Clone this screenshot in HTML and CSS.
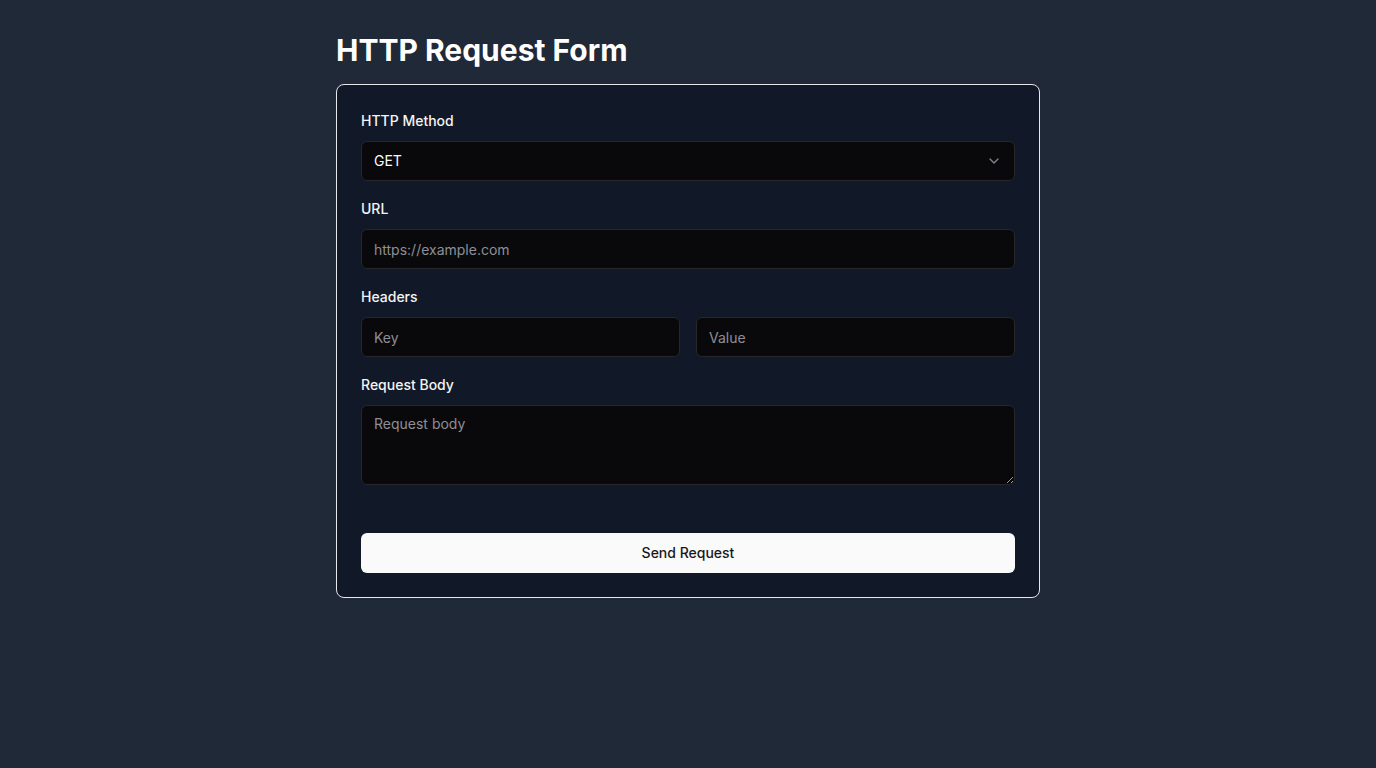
FILE: index.html
```html
<!DOCTYPE html>
<html lang="en">
<head>
<meta charset="utf-8">
<title>HTTP Request Form</title>
<link rel="stylesheet" href="styles.css">
</head>
<body>
<main class="page">
  <h1 class="title">HTTP Request Form</h1>
  <form class="card">
    <div class="field">
      <label class="label">HTTP Method</label>
      <button type="button" class="control select">
        <span>GET</span>
        <svg class="chev" width="16" height="16" viewBox="0 0 24 24" fill="none" stroke="currentColor" stroke-width="2" stroke-linecap="round" stroke-linejoin="round"><path d="m6 9 6 6 6-6"/></svg>
      </button>
    </div>
    <div class="field">
      <label class="label">URL</label>
      <input class="control" type="text" placeholder="https://example.com">
    </div>
    <div class="field">
      <label class="label">Headers</label>
      <div class="pair">
        <input class="control" type="text" placeholder="Key">
        <input class="control" type="text" placeholder="Value">
      </div>
    </div>
    <div class="field">
      <label class="label">Request Body</label>
      <textarea class="control area" placeholder="Request body"></textarea>
    </div>
    <button type="button" class="submit">Send Request</button>
  </form>
</main>
</body>
</html>
```

FILE: styles.css
```css
* { box-sizing: border-box; }
html, body { margin: 0; padding: 0; }
body {
  background: #1f2937;
  color: #f9fafb;
  font-family: Inter, "Noto Sans", sans-serif;
  min-height: 100vh;
}
.page {
  width: 704px;
  margin: 0 auto;
  padding-top: 32px;
}
.title {
  margin: 0 0 16px;
  font-size: 30px;
  line-height: 36px;
  font-weight: 700;
  color: #ffffff;
}
.card {
  background: #111827;
  border: 1px solid #e5e7eb;
  border-radius: 8px;
  padding: 24px;
  display: flex;
  flex-direction: column;
  gap: 16px;
}
.field {
  display: flex;
  flex-direction: column;
  gap: 10px;
}
.label {
  font-size: 14px;
  line-height: 20px;
  padding-top: 2px;
  font-weight: 500;
  color: #f4f4f5;
}
.control {
  width: 100%;
  height: 40px;
  background: #09090b;
  border: 1px solid #27272a;
  border-radius: 6px;
  padding: 0 12px;
  font-family: inherit;
  font-size: 14px;
  color: #fafafa;
  outline: none;
}
.control::placeholder { color: #8e8e96; }
.select {
  display: flex;
  align-items: center;
  justify-content: space-between;
  text-align: left;
  cursor: pointer;
  padding-bottom: 2px;
}
.chev { color: #a1a1aa; opacity: 0.8; width: 16px; height: 16px; margin-top: 2px; }
.pair {
  display: grid;
  grid-template-columns: 1fr 1fr;
  gap: 16px;
}
.area {
  height: 80px;
  padding: 8px 12px;
  line-height: 20px;
  resize: vertical;
  display: block;
}
.submit {
  margin-top: 32px;
  height: 40px;
  border: 0;
  border-radius: 6px;
  background: #fafafa;
  color: #18181b;
  font-family: inherit;
  font-size: 14px;
  font-weight: 500;
  cursor: pointer;
  padding: 0 0 2px;
}
```
